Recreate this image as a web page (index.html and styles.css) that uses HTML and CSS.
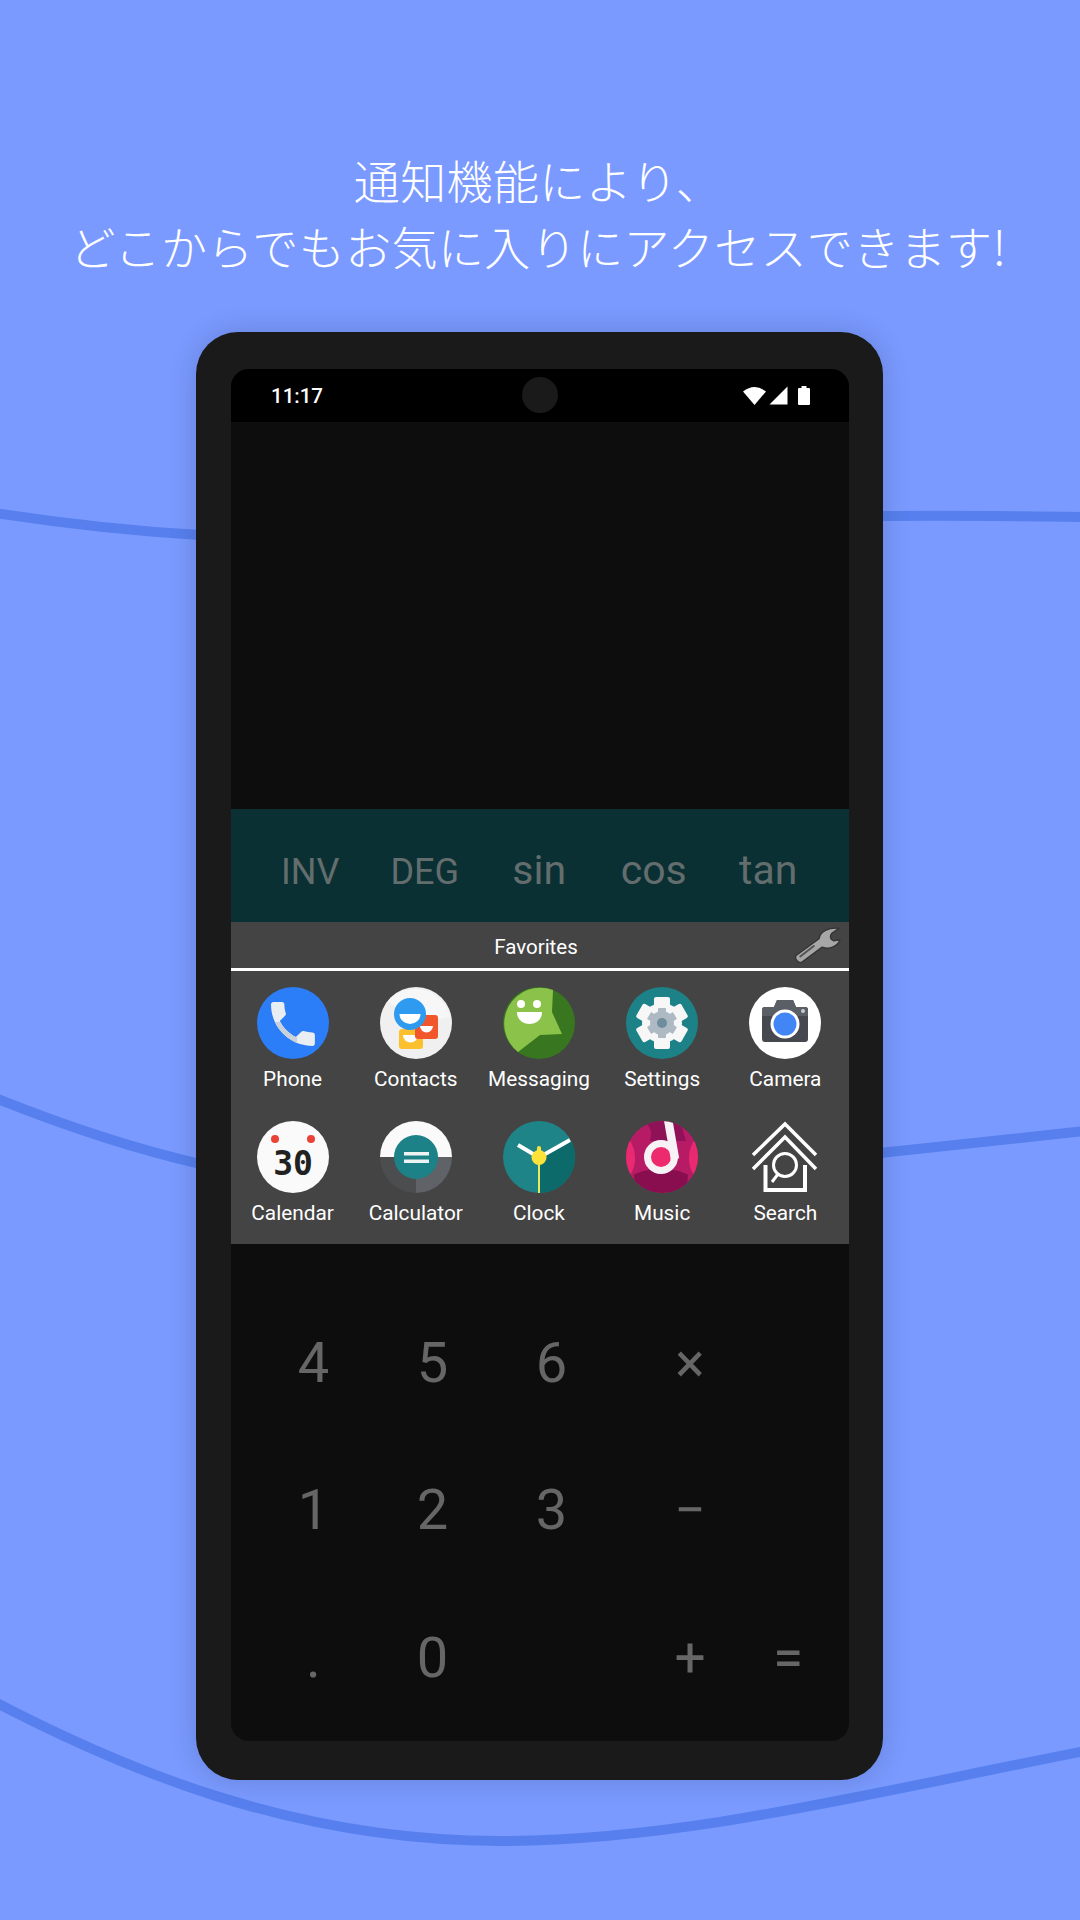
FILE: index.html
```
<!DOCTYPE html>
<html lang="ja">
<head>
	<title>Favorites</title>
	<meta charset="utf-8">
	<meta name="viewport" content="width=device-width, initial-scale=1.0">
	<link rel="stylesheet" href="styles.css">
</head>
<body>

<svg class="waves" viewBox="0 0 1080 1920">
	<path d="M-5 513 C60 523 130 531 200 535"/>
	<path d="M880 516 C950 515 1010 516 1085 517"/>
	<path d="M-5 1098 C60 1124 130 1148 200 1164"/>
	<path d="M880 1153 C950 1145 1020 1138 1085 1131"/>
	<path d="M-5 1702 C120 1767 290 1841 500 1841 C680 1841 860 1795 1085 1751"/>
</svg>

<div class="page">
	<h1 class="title">通知機能により、<br>どこからでもお気に入りにアクセスできます!</h1>

	<div class="phone">
		<div class="screen">
			<div class="statusbar">
				<span class="clock">11:17</span>
				<div class="statusicons">
					<svg width="23" height="19" viewBox="0 0 23 19"><path fill="#fff" d="M0 5.5 Q11.5 -3.5 23 5.5 L11.5 19Z"/></svg>
					<svg width="19" height="19" viewBox="0 0 19 19"><path fill="#fff" d="M18.5 0.5V18.5H0.5Z"/></svg>
					<svg class="battery" width="12" height="19" viewBox="0 0 12 19"><path fill="#fff" d="M3.5 0h5v2H11a1 1 0 0 1 1 1v15a1 1 0 0 1-1 1H1a1 1 0 0 1-1-1V3a1 1 0 0 1 1-1h2.500z"/></svg>
				</div>
				<div class="camerahole"></div>
			</div>

			<div class="display"></div>

			<div class="sciencerow">
				<span>INV</span>
				<span>DEG</span>
				<span class="lower">sin</span>
				<span class="lower">cos</span>
				<span class="lower">tan</span>
			</div>

			<div class="favheader">
				<span>Favorites</span>
				<svg class="wrench" width="48" height="38" viewBox="0 0 46 36">
					<path fill="#a6a6a6" stroke="#333" stroke-width="1.3" stroke-linejoin="round" d="M2 28 L24 12 C25 5 33 1 43 2 L36 7 C34 10 35 13 38 14 L44 13 C42 19 34 23 27 20 L8 34 C5 36 0 32 2 28Z"/>
					<path stroke="#555" stroke-width="2" stroke-linecap="round" d="M6 29 L19 19"/>
				</svg>
			</div>

			<div class="favgrid">
				<div class="app">
					<svg class="icon" viewBox="0 0 72 72">
						<defs>
							<clipPath id="handset"><path d="M22.800 34 c3.500 6.900 9.200 12.500 16.100 16.100 l5.400-5.400 c.7-.7 1.600-.9 2.500-.6 2.700.9 5.700 1.400 8.700 1.400 1.300 0 2.400 1.100 2.400 2.400 V56.500 c0 1.300-1.100 2.400-2.400 2.400 C32.700 58.900 14 40.300 14 17.400 14 16.100 15.100 15 16.400 15 H25 c1.300 0 2.400 1.100 2.400 2.400 0 3.100.5 6 1.400 8.700 .3.900.1 1.800-.6 2.500z"/></clipPath>
						</defs>
						<circle cx="36" cy="36" r="36" fill="#2b7df8"/>
						<rect x="10" y="10" width="52" height="52" fill="#e9eef3" clip-path="url(#handset)"/>
						<path fill="#c9d2da" clip-path="url(#handset)" d="M10 35 H30 L40 46 V62 H10Z"/>
					</svg>
					<span>Phone</span>
				</div>
				<div class="app">
					<svg class="icon" viewBox="0 0 72 72">
						<circle cx="36" cy="36" r="36" fill="#f0f0f0"/>
						<path fill="#f7f7f7" d="M8 14 L36 36 L70 30 A36 36 0 0 0 8 14Z"/>
						<rect x="19" y="42" width="24" height="20" rx="3" fill="#fbc02d"/>
						<path fill="#fff" d="M23 48 H38 A7.500 7.500 0 0 1 23 48Z"/>
						<rect x="35" y="28" width="23" height="24" rx="3" fill="#f2562b"/>
						<path fill="#fff" d="M40 39 H53 A6.500 6.500 0 0 1 40 39Z"/>
						<circle cx="30" cy="27" r="16" fill="#2e9bf0"/>
						<path fill="#fff" d="M19.500 27 H40.500 A10.500 10 0 0 1 19.500 27Z"/>
					</svg>
					<span>Contacts</span>
				</div>
				<div class="app">
					<svg class="icon" viewBox="0 0 72 72">
						<circle cx="36" cy="36" r="36" fill="#38761f"/>
						<path fill="#8bc34a" d="M50 3 L49 25 L59 47 L37 48 L15 65 A36 36 0 0 1 50 3Z"/>
						<circle cx="18" cy="17" r="4" fill="#fff"/>
						<circle cx="34" cy="17" r="4" fill="#fff"/>
						<path fill="#fff" d="M14 25 H39 C39 33 33 37 26.500 37 C20 37 14 33 14 25Z"/>
					</svg>
					<span>Messaging</span>
				</div>
				<div class="app">
					<svg class="icon" viewBox="0 0 72 72">
						<circle cx="36" cy="36" r="36" fill="#1d8287"/>
						<g fill="#f7f7f7">
							<circle cx="36" cy="36" r="20"/>
							<rect x="28" y="10" width="16" height="52" rx="2"/>
							<rect x="28" y="10" width="16" height="52" rx="2" transform="rotate(60 36 36)"/>
							<rect x="28" y="10" width="16" height="52" rx="2" transform="rotate(120 36 36)"/>
						</g>
						<g fill="#aebac3">
							<circle cx="36" cy="36" r="12"/>
							<rect x="32" y="21" width="8" height="30" rx="1"/>
							<rect x="32" y="21" width="8" height="30" rx="1" transform="rotate(60 36 36)"/>
							<rect x="32" y="21" width="8" height="30" rx="1" transform="rotate(120 36 36)"/>
						</g>
						<circle cx="36" cy="36" r="5" fill="#6d8c9c"/>
					</svg>
					<span>Settings</span>
				</div>
				<div class="app">
					<svg class="icon" viewBox="0 0 72 72">
						<circle cx="36" cy="36" r="36" fill="#fff"/>
						<path fill="#45484e" d="M25 20 L28 13 H44 L47 20 H56 A3 3 0 0 1 59 23 V52 A3 3 0 0 1 56 55 H16 A3 3 0 0 1 13 52 V23 A3 3 0 0 1 16 20Z"/>
						<path fill="#5a5e65" d="M25 20 L28 13 H44 L47 20 H56 A3 3 0 0 1 59 23 V29 H13 V23 A3 3 0 0 1 16 20Z"/>
						<circle cx="36" cy="37" r="14.500" fill="#fff"/>
						<circle cx="36" cy="37" r="11.500" fill="#4285f4"/>
						<circle cx="54" cy="24" r="2" fill="#c9ccd0"/>
					</svg>
					<span>Camera</span>
				</div>

				<div class="app">
					<svg class="icon" viewBox="0 0 72 72">
						<circle cx="36" cy="36" r="36" fill="#fafafa"/>
						<circle cx="18" cy="18" r="4" fill="#ea4335"/>
						<circle cx="54" cy="18" r="4" fill="#ea4335"/>
						<text class="calday" x="36" y="54" text-anchor="middle">30</text>
					</svg>
					<span>Calendar</span>
				</div>
				<div class="app">
					<svg class="icon" viewBox="0 0 72 72">
						<path fill="#fafafa" d="M0 36 A36 36 0 0 1 72 36Z"/>
						<path fill="#4b4d4f" d="M0 36 H36 V72 A36 36 0 0 1 0 36Z"/>
						<path fill="#5f6368" d="M36 36 H72 A36 36 0 0 1 36 72Z"/>
						<circle cx="36" cy="36" r="22" fill="#1d8287"/>
						<rect x="24" y="31" width="25" height="3.500" fill="#eef4f4"/>
						<rect x="24" y="38.500" width="25" height="3.500" fill="#eef4f4"/>
					</svg>
					<span>Calculator</span>
				</div>
				<div class="app">
					<svg class="icon" viewBox="0 0 72 72">
						<circle cx="36" cy="36" r="36" fill="#1f8487"/>
						<path fill="#0d6a6b" d="M36 36 L68 19 A36 36 0 0 1 36 72Z"/>
						<path stroke="#fff" stroke-width="4" d="M15 24 L36 36.500 L67 19" fill="none"/>
						<rect x="34" y="25" width="4" height="12" rx="2" fill="#fde23a"/>
						<rect x="35" y="36" width="2" height="36" fill="#e6ea5c"/>
						<circle cx="36" cy="36.500" r="7.500" fill="#fde23a"/>
					</svg>
					<span>Clock</span>
				</div>
				<div class="app">
					<svg class="icon" viewBox="0 0 72 72">
						<defs>
							<clipPath id="musicclip"><circle cx="36" cy="36" r="36"/></clipPath>
						</defs>
						<g clip-path="url(#musicclip)">
							<rect width="72" height="72" fill="#b81b66"/>
							<path fill="#8f1158" d="M18 -2 C26 10 26 10 24 20 H60 C56 8 56 4 54 -2Z"/>
							<path fill="#880e4f" d="M8 54 C20 46 50 46 62 54 L60 74 H10Z"/>
							<path fill="#ea2a70" d="M0 14 C12 28 12 46 0 60 Z"/>
							<path fill="#ea2a70" d="M72 14 C60 28 60 46 72 60 Z"/>
							<circle cx="35" cy="36" r="13.500" fill="#ee2a6e" stroke="#f7f2f6" stroke-width="7"/>
							<path stroke="#f7f2f6" stroke-width="8.500" d="M42 -2 L49 38" fill="none"/>
						</g>
					</svg>
					<span>Music</span>
				</div>
				<div class="app">
					<svg class="icon" viewBox="0 0 72 72" fill="none" stroke="#fff" stroke-width="3.500">
						<path d="M4 34 L36 3 L67 34"/>
						<path d="M4 48 L36 16 L67 48"/>
						<path stroke-width="4" d="M16.500 44 V69 H56 V44"/>
						<circle cx="36" cy="44" r="11.500" stroke-width="3"/>
						<path stroke-width="3" d="M29 53 L23 61"/>
					</svg>
					<span>Search</span>
				</div>
			</div>

			<div class="keypad">
				<div class="digits">
					<span>4</span><span>5</span><span>6</span>
					<span>1</span><span>2</span><span>3</span>
					<span>.</span><span>0</span><span></span>
				</div>
				<div class="ops">
					<span>×</span><span></span>
					<span>−</span><span></span>
					<span>+</span><span>=</span>
				</div>
			</div>
		</div>
	</div>
</div>

</body>
</html>
```

FILE: styles.css
```
html, body {
	margin: 0;
	height: 100%;
}
body {
	position: relative;
	width: 1080px;
	height: 1920px;
	overflow: hidden;
	background: #7a9aff;
	font-family: Roboto, "Noto Sans", sans-serif;
}
.waves {
	position: absolute;
	left: 0;
	top: 0;
	width: 1080px;
	height: 1920px;
	fill: none;
	stroke: #5780ee;
	stroke-width: 10;
}
.page {
	position: relative;
	display: flex;
	flex-direction: column;
	align-items: center;
	padding-top: 146px;
}
.title {
	margin: 0 4px 54px 0;
	color: #fff;
	font-family: "Noto Sans CJK JP", sans-serif;
	font-size: 46px;
	font-weight: 300;
	letter-spacing: 0.4px;
	line-height: 66px;
	text-align: center;
	white-space: nowrap;
}
.phone {
	box-sizing: border-box;
	width: 687px;
	height: 1448px;
	margin-right: 1px;
	padding: 37px 34px 39px 35px;
	background: #1a1a1a;
	border-radius: 42px;
	box-shadow: 0 0 28px rgba(0, 0, 0, 0.16);
}
.screen {
	display: flex;
	flex-direction: column;
	height: 100%;
	overflow: hidden;
	background: #0d0d0d;
	border-radius: 18px;
}

/* status bar */
.statusbar {
	position: relative;
	display: flex;
	flex: none;
	align-items: center;
	justify-content: space-between;
	height: 53px;
	padding: 0 39px 0 40px;
	background: #000;
	color: #fff;
}
.clock {
	font-size: 20.5px;
	font-weight: 500;
}
.statusicons {
	display: flex;
	align-items: center;
	gap: 3px;
}
.statusicons .battery {
	margin-left: 7px;
}
.camerahole {
	position: absolute;
	left: 50%;
	top: 8px;
	width: 36px;
	height: 36px;
	margin-left: -18px;
	background: #1a1a1a;
	border-radius: 50%;
}

.display {
	flex: none;
	height: 387px;
}

.sciencerow {
	display: grid;
	flex: none;
	grid-template-columns: repeat(5, 114.5px);
	align-items: baseline;
	box-sizing: border-box;
	height: 113px;
	padding: 36px 0 0 22px;
	background: #0a3033;
	color: #636d6d;
	font-size: 36px;
	line-height: 50px;
	text-align: center;
}
.sciencerow .lower {
	font-size: 41px;
}

/* favorites panel */
.favheader {
	position: relative;
	display: flex;
	flex: none;
	align-items: center;
	justify-content: center;
	box-sizing: border-box;
	height: 49px;
	padding: 3px 8px 0 0;
	background: #444;
	border-bottom: 3px solid #fff;
	color: #fff;
	font-size: 20.5px;
}
.wrench {
	position: absolute;
	right: 7px;
	top: 4px;
}
.favgrid {
	display: grid;
	flex: none;
	grid-template-columns: repeat(5, 123.2px);
	grid-auto-rows: 134px;
	box-sizing: border-box;
	height: 273px;
	padding-top: 16px;
	background: #444;
}
.app {
	display: flex;
	flex-direction: column;
	align-items: center;
	color: #fff;
	font-size: 20.8px;
	line-height: 28px;
}
.icon {
	display: block;
	width: 72px;
	height: 72px;
	margin-bottom: 6px;
}
.calday {
	fill: #212121;
	font-family: "DejaVu Sans Mono", monospace;
	font-size: 33px;
	font-weight: bold;
}

/* keypad */
.keypad {
	display: flex;
	flex: 1;
	padding: 45px 0 0 23px;
	color: #666;
}
.digits,
.ops {
	display: grid;
	grid-auto-rows: 147.5px;
	align-items: center;
	text-align: center;
}
.digits {
	grid-template-columns: repeat(3, 119px);
	font-size: 56px;
}
.ops {
	grid-template-columns: repeat(2, 98px);
	margin-left: 30px;
	font-size: 55px;
}
```
